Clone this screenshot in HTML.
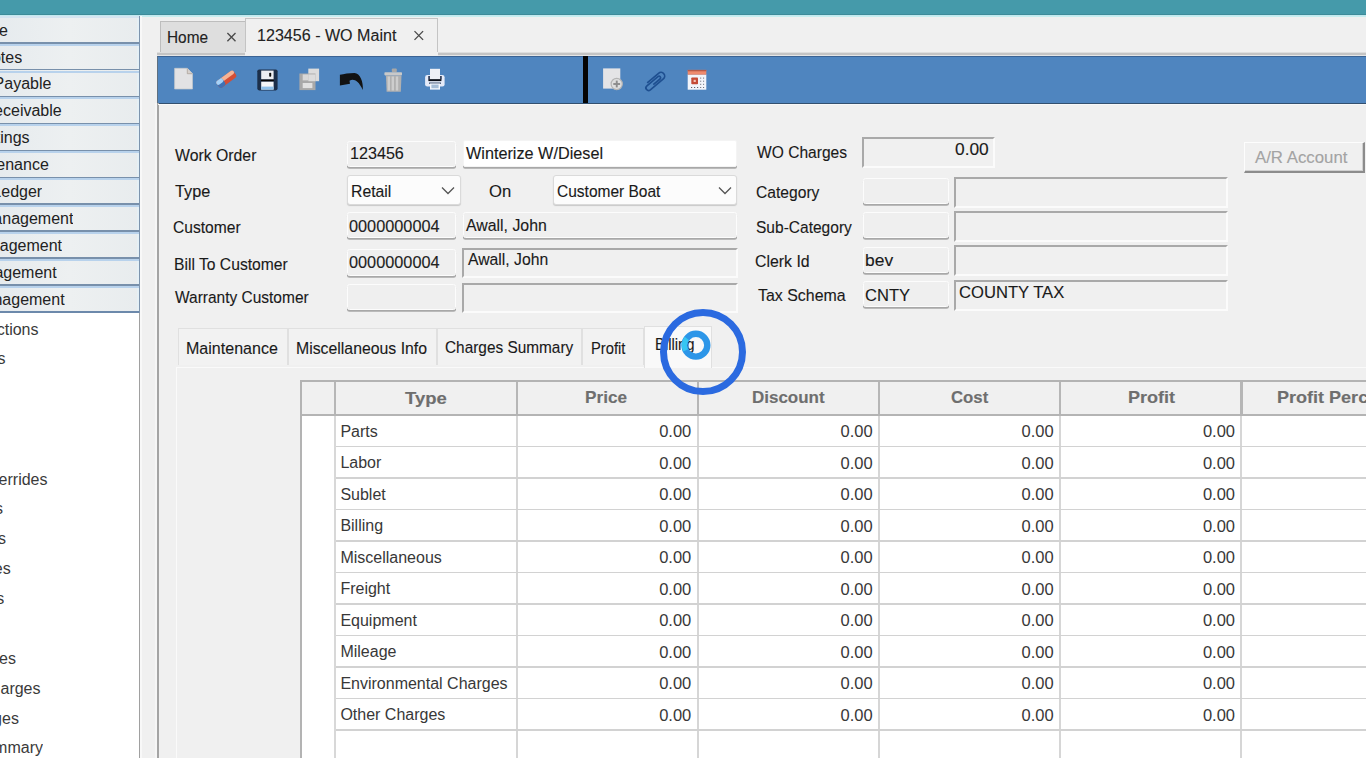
<!DOCTYPE html>
<html><head><meta charset="utf-8"><title>WO Maint</title>
<style>
*{margin:0;padding:0;box-sizing:border-box}
html,body{width:1366px;height:758px;overflow:hidden;background:#f0f0f0;font-family:"Liberation Sans", sans-serif;color:#1e1e1e}
.ab{position:absolute}
.t{position:absolute;white-space:nowrap;line-height:1;transform-origin:0 0;-webkit-text-stroke:0.12px currentColor}
.sb{position:absolute;left:0;width:139px;height:27px;background:linear-gradient(90deg,#e6ebee 0%,#edf0f1 50%,#e8ecee 100%)}
.sbl{position:absolute;left:0;white-space:nowrap;direction:rtl;overflow:hidden;font-size:16px;line-height:1;color:#222}
.li{position:absolute;left:0;white-space:nowrap;direction:rtl;overflow:hidden;font-size:16px;line-height:1;color:#3a3a3a}
.ro{position:absolute;background:#efefef;border:1.3px solid #fcfcfc;border-radius:2.5px;box-shadow:0 1.8px 0 #a8a8a8}
.wh{position:absolute;background:#fff;border:1px solid #f4f4f4;border-radius:2px;box-shadow:0 1.8px 0 #a8a8a8}
.sk{position:absolute;background:#f0f0f0;border-top:2px solid #a9a9a9;border-left:2px solid #a9a9a9;border-right:2px solid #fbfbfb;border-bottom:2px solid #fbfbfb}
.sel{position:absolute;background:#fcfcfc;border:1px solid #dadada;border-radius:3px;box-shadow:0 1px 1px #c8c8c8}
.gc{position:absolute;white-space:nowrap;font-size:16.5px;line-height:1;color:#383838}
</style></head><body>

<div class="ab" style="left:0;top:0;width:1366px;height:15px;background:#459aaa"></div>
<div class="ab" style="left:0;top:13.8px;width:1366px;height:1.2px;background:#3d8b99"></div>
<div class="ab" style="left:0;top:15px;width:1366px;height:1.6px;background:#c6eef0"></div>
<div class="ab" style="left:0;top:312px;width:139px;height:446px;background:#fff"></div>
<div class="sb" style="top:16.0px"></div>
<div class="sb" style="top:42.9px"></div>
<div class="sb" style="top:69.8px"></div>
<div class="sb" style="top:96.7px"></div>
<div class="sb" style="top:123.6px"></div>
<div class="sb" style="top:150.5px"></div>
<div class="sb" style="top:177.4px"></div>
<div class="sb" style="top:204.3px"></div>
<div class="sb" style="top:231.2px"></div>
<div class="sb" style="top:258.1px"></div>
<div class="sb" style="top:285.0px"></div>
<div class="ab" style="left:136.5px;top:16px;width:2.5px;height:296px;background:#e4f2fa;opacity:.7"></div>
<div class="ab" style="left:0;top:42.0px;width:139px;height:1.6px;background:#7890ab"></div>
<div class="ab" style="left:0;top:43.6px;width:139px;height:2px;background:#b8d2ec"></div>
<div class="sbl" style="top:22.6px;width:7.9px;height:19px">Home</div>
<div class="ab" style="left:0;top:68.9px;width:139px;height:1.6px;background:#7890ab"></div>
<div class="ab" style="left:0;top:70.5px;width:139px;height:2px;background:#b8d2ec"></div>
<div class="sbl" style="top:49.5px;width:22.2px;height:19px">Quotes</div>
<div class="ab" style="left:0;top:95.8px;width:139px;height:1.6px;background:#7890ab"></div>
<div class="ab" style="left:0;top:97.4px;width:139px;height:2px;background:#b8d2ec"></div>
<div class="sbl" style="top:76.4px;width:51.4px;height:19px">Accounts Payable</div>
<div class="ab" style="left:0;top:122.7px;width:139px;height:1.6px;background:#7890ab"></div>
<div class="ab" style="left:0;top:124.3px;width:139px;height:2px;background:#b8d2ec"></div>
<div class="sbl" style="top:103.3px;width:61.7px;height:19px">Accounts Receivable</div>
<div class="ab" style="left:0;top:149.6px;width:139px;height:1.6px;background:#7890ab"></div>
<div class="ab" style="left:0;top:151.2px;width:139px;height:2px;background:#b8d2ec"></div>
<div class="sbl" style="top:130.2px;width:29.6px;height:19px">Listings</div>
<div class="ab" style="left:0;top:176.5px;width:139px;height:1.6px;background:#7890ab"></div>
<div class="ab" style="left:0;top:178.1px;width:139px;height:2px;background:#b8d2ec"></div>
<div class="sbl" style="top:157.1px;width:48.8px;height:19px">Maintenance</div>
<div class="ab" style="left:0;top:203.4px;width:139px;height:1.6px;background:#7890ab"></div>
<div class="ab" style="left:0;top:205.0px;width:139px;height:2px;background:#b8d2ec"></div>
<div class="sbl" style="top:184.0px;width:42.2px;height:19px">General Ledger</div>
<div class="ab" style="left:0;top:230.3px;width:139px;height:1.6px;background:#7890ab"></div>
<div class="ab" style="left:0;top:231.9px;width:139px;height:2px;background:#b8d2ec"></div>
<div class="sbl" style="top:210.9px;width:73.4px;height:19px">Management</div>
<div class="ab" style="left:0;top:257.2px;width:139px;height:1.6px;background:#7890ab"></div>
<div class="ab" style="left:0;top:258.8px;width:139px;height:2px;background:#b8d2ec"></div>
<div class="sbl" style="top:237.8px;width:62.0px;height:19px">Management</div>
<div class="ab" style="left:0;top:284.1px;width:139px;height:1.6px;background:#7890ab"></div>
<div class="ab" style="left:0;top:285.7px;width:139px;height:2px;background:#b8d2ec"></div>
<div class="sbl" style="top:264.7px;width:56.7px;height:19px">Management</div>
<div class="ab" style="left:0;top:311.0px;width:139px;height:1.6px;background:#7890ab"></div>
<div class="sbl" style="top:291.6px;width:64.6px;height:19px">Management</div>
<div class="ab" style="left:0;top:311px;width:139px;height:2px;background:#6c89ab"></div>
<div class="ab" style="left:139px;top:16px;width:1px;height:297px;background:#7d94ad"></div>
<div class="ab" style="left:139px;top:313px;width:1px;height:445px;background:#a0a0a0"></div>
<div class="ab" style="left:0;top:15px;width:1366px;height:1.4px;background:#c2e9ef"></div><div class="ab" style="left:0;top:16.4px;width:139px;height:1.2px;background:#d4e4f0"></div>
<div class="li" style="top:321.5px;width:38.5px;height:19px">Transactions</div>
<div class="li" style="top:351.2px;width:5.5px;height:19px">Items</div>
<div class="li" style="top:471.6px;width:47.5px;height:19px">Overrides</div>
<div class="li" style="top:501.0px;width:2.9px;height:19px">Options</div>
<div class="li" style="top:530.9px;width:5.9px;height:19px">Accounts</div>
<div class="li" style="top:561.1px;width:10.7px;height:19px">Types</div>
<div class="li" style="top:590.8px;width:4.3px;height:19px">Parts</div>
<div class="li" style="top:650.7px;width:16.0px;height:19px">Rates</div>
<div class="li" style="top:681.1px;width:40.5px;height:19px">Other Charges</div>
<div class="li" style="top:710.7px;width:18.9px;height:19px">Charges</div>
<div class="li" style="top:740.2px;width:43.0px;height:19px">Summary</div>
<div class="ab" style="left:157px;top:313px;width:1.6px;height:445px;background:#a4a4a4"></div>
<div class="ab" style="left:159.5px;top:21px;width:86px;height:32px;background:#dedede;border:1px solid #bdbdbd;border-bottom:none"></div>
<div class="t" id="home" style="left:166.76px;top:29.65px;font-size:16px;font-weight:400;color:#222;transform:scaleX(0.9612)">Home</div>
<svg class="ab" style="left:224px;top:30px" width="15" height="15" viewBox="224 30 15 15"><path d="M227.4 33.1 L235.5 41.2 M235.5 33.1 L227.4 41.2" stroke="#4a4a4a" stroke-width="1.35" fill="none"/></svg>
<div class="ab" style="left:245px;top:18px;width:193px;height:38px;background:#f0f0f0;border:1px solid #c4c4c4;border-bottom:none"></div>
<div class="t" id="wot" style="left:256.59px;top:28.25px;font-size:16px;font-weight:400;color:#222;transform:scaleX(1.0050)">123456 - WO Maint</div>
<svg class="ab" style="left:411px;top:28px" width="15" height="15" viewBox="411 28 15 15"><path d="M414.5 31.1 L423.1 39.9 M423.1 31.1 L414.5 39.9" stroke="#4a4a4a" stroke-width="1.35" fill="none"/></svg>
<div class="ab" style="left:157px;top:52px;width:1209px;height:1px;background:#dedede"></div><div class="ab" style="left:157px;top:53px;width:1209px;height:2.2px;background:#c4c4c4"></div><div class="ab" style="left:157px;top:55.2px;width:1209px;height:1px;background:#e6e6e6"></div>
<div class="ab" style="left:245px;top:52px;width:193px;height:4px;background:#f0f0f0"></div>
<div class="ab" style="left:157px;top:56px;width:1209px;height:47.8px;background:#4f85bf;border-top:1px solid #3b6394;border-bottom:1.3px solid #33506f;border-left:1.5px solid #5f7080"></div>
<div class="ab" style="left:583px;top:56px;width:4.5px;height:47px;background:#050505"></div>
<div class="ab" style="left:157px;top:103px;width:1.6px;height:210px;background:#a4a4a4"></div><div class="ab" style="left:155px;top:103px;width:1.5px;height:655px;background:#f6f6f6"></div><div class="ab" style="left:140px;top:16px;width:2px;height:742px;background:#f8f8f8"></div><div class="ab" style="left:158px;top:104px;width:1208px;height:1.2px;background:#f8f8f8"></div>

<svg class="ab" style="left:170px;top:64px" width="30" height="30" viewBox="170 64 30 30">
 <path d="M174.6 68.3 H187.4 L192.5 73.6 V89 H174.6 Z" fill="#e2e2e4"/>
 <path d="M174.6 68.3 H187.4 L192.5 73.6 V89 H174.6 Z" fill="none" stroke="#c4c8cc" stroke-width="0.7"/>
 <path d="M187.3 68.5 V73.7 H192.4" fill="#d6d0cc" stroke="#a89c94" stroke-width="0.7"/>
</svg>
<svg class="ab" style="left:212px;top:66px" width="28" height="26" viewBox="212 66 28 26">
 <g transform="translate(226.4 79.3) rotate(-36)">
  <rect x="-10.5" y="-4.1" width="21" height="8.2" rx="2.4" fill="#d44e36"/>
  <rect x="-10.5" y="-4.1" width="21" height="4" rx="1.8" fill="#f6b496"/>
  <rect x="-10.5" y="-4.1" width="7.5" height="8.2" rx="2.4" fill="#3d72b6"/>
  <rect x="-10.5" y="-4.1" width="7.5" height="4.2" rx="1.8" fill="#a6d2f8"/>
 </g>
</svg>
<svg class="ab" style="left:254px;top:66px" width="28" height="28" viewBox="254 66 28 28">
 <rect x="257.3" y="69.4" width="20.3" height="21" rx="1.8" fill="#1c2f4a"/>
 <rect x="261.2" y="70.6" width="12.4" height="8.8" fill="#eceef2"/>
 <rect x="269.2" y="72.8" width="2" height="3.9" rx="0.8" fill="#0c0c0c"/>
 <rect x="261.2" y="81.6" width="12.4" height="8" fill="#f4f6f8"/>
 <rect x="261.2" y="86.6" width="12.4" height="3" fill="#8ec0ea"/>
 <rect x="261" y="79.6" width="12.8" height="1.6" fill="#050505"/>
</svg>
<svg class="ab" style="left:296px;top:66px" width="28" height="28" viewBox="296 66 28 28">
 <rect x="308.3" y="68.6" width="10.8" height="12.6" fill="#dcdcdc"/>
 <rect x="299.4" y="73.5" width="16.1" height="16.6" fill="#a9a9a9"/>
 <rect x="302.7" y="74.4" width="5.6" height="6" fill="#d8d8d8"/>
 <rect x="308.3" y="74.4" width="7.2" height="6.8" fill="#dcdcdc"/>
 <rect x="302.7" y="83" width="9.7" height="5.1" fill="#e2e2e2"/>
</svg>
<svg class="ab" style="left:336px;top:66px" width="34" height="28" viewBox="336 66 34 28">
 <path d="M339.9 74.8 L339.9 85.6 L350 83.7 L349.5 80.8 C353 78.6 358 79.5 362.8 90 C363.5 82 360 73 354.5 73 C349 73 344 74 339.9 74.8 Z" fill="#121212"/>
</svg>
<svg class="ab" style="left:382px;top:66px" width="24" height="28" viewBox="382 66 24 28">
 <rect x="391.8" y="68.6" width="5" height="3.6" rx="1" fill="#a8a8a8"/>
 <rect x="384.4" y="72.2" width="17.6" height="3.2" rx="0.8" fill="#c9c9c9"/>
 <path d="M385.9 75.4 H401.5 L400.8 91.7 H386.6 Z" fill="#b0b0b0"/>
 <rect x="387.6" y="76.5" width="2.4" height="14" fill="#cdcdcd"/>
 <rect x="391.6" y="76.5" width="2.4" height="14" fill="#cdcdcd"/>
 <rect x="395.8" y="76.5" width="2.4" height="14" fill="#cdcdcd"/>
</svg>
<svg class="ab" style="left:422px;top:66px" width="26" height="28" viewBox="422 66 26 28">
 <rect x="430" y="68.9" width="10" height="11" fill="#eceef4"/>
 <rect x="425.1" y="75" width="19.5" height="11.5" rx="2.2" fill="#e4eaf8"/>
 <rect x="428.2" y="76" width="13.6" height="3.4" fill="#3a4660"/>
 <rect x="430" y="68.9" width="10" height="10.4" fill="#eef0f6"/>
 <rect x="428.4" y="79.2" width="13" height="1.9" fill="#0a0e16"/>
 <rect x="429" y="82.4" width="12" height="1.6" fill="#5a6a86"/>
 <rect x="430" y="83.5" width="10" height="6.1" fill="#f2f6fc"/>
 <rect x="431.4" y="84.6" width="7.2" height="3.6" fill="#a4bcd6"/>
</svg>
<svg class="ab" style="left:600px;top:66px" width="26" height="28" viewBox="600 66 26 28">
 <rect x="603.1" y="68.4" width="17.2" height="20.2" fill="#e4e4e6"/>
 <circle cx="616.7" cy="84" r="5.6" fill="#dedede" stroke="#b4b4b4" stroke-width="1.2"/>
 <rect x="615.8" y="80.6" width="1.9" height="6.8" fill="#8c8c8c"/>
 <rect x="613.3" y="83.05" width="6.8" height="1.9" fill="#8c8c8c"/>
</svg>
<svg class="ab" style="left:642px;top:68px" width="26" height="26" viewBox="642 68 26 26">
 <g transform="translate(654.9 81.2) rotate(-40) scale(1.16)" fill="none" stroke="#1e4f90" stroke-width="1.45">
  <path d="M-6 -3.2 H6.8 A3.2 3.2 0 0 1 6.8 3.2 H-7.8 A2.3 2.3 0 0 1 -7.8 -1.4 H4.6 A1.4 1.4 0 0 1 4.6 1.4 H-3"/>
 </g>
</svg>
<svg class="ab" style="left:684px;top:66px" width="26" height="28" viewBox="684 66 26 28">
 <rect x="687.7" y="74.5" width="18.6" height="15.2" fill="#f2f4fa"/>
 <rect x="687.7" y="69.9" width="18.6" height="4.8" fill="#ee8a6e"/>
 <rect x="687.7" y="69.9" width="18.6" height="1.4" fill="#b85a48"/>
 <rect x="691.3" y="77.5" width="6.7" height="6.7" rx="0.8" fill="#c44a36"/>
 <rect x="693.6" y="79.8" width="2.2" height="2.2" fill="#f6c4b6"/>
 <g fill="#606470">
  <rect x="700.2" y="77.6" width="1" height="1"/><rect x="703.1" y="77.6" width="1" height="1"/>
  <rect x="700.2" y="80.7" width="1" height="1"/><rect x="703.1" y="80.7" width="1" height="1"/>
  <rect x="700.2" y="83.8" width="1" height="1"/><rect x="703.1" y="83.8" width="1" height="1"/>
  <rect x="691" y="87" width="1.2" height="1"/><rect x="694" y="87" width="1.2" height="1"/><rect x="697" y="87" width="1.2" height="1"/><rect x="700.2" y="87" width="1" height="1"/><rect x="703.1" y="87" width="1" height="1"/>
 </g>
</svg>

<div class="t" id="l1" style="left:174.81px;top:146.60px;font-size:17px;font-weight:400;color:#1a1a1a;transform:scaleX(0.9299)">Work Order</div>
<div class="t" id="l2" style="left:174.82px;top:182.60px;font-size:17px;font-weight:400;color:#1a1a1a;transform:scaleX(0.9558)">Type</div>
<div class="t" id="l3" style="left:172.77px;top:218.80px;font-size:17px;font-weight:400;color:#1a1a1a;transform:scaleX(0.9179)">Customer</div>
<div class="t" id="l4" style="left:173.99px;top:256.00px;font-size:17px;font-weight:400;color:#1a1a1a;transform:scaleX(0.9218)">Bill To Customer</div>
<div class="t" id="l5" style="left:174.61px;top:289.40px;font-size:17px;font-weight:400;color:#1a1a1a;transform:scaleX(0.9108)">Warranty Customer</div>
<div class="ro" style="left:346.5px;top:140.5px;width:109px;height:26.2px"></div>
<div class="t" id="i1" style="left:350.16px;top:145.40px;font-size:17px;font-weight:400;color:#1a1a1a;transform:scaleX(0.9490)">123456</div>
<div class="sel" style="left:346.5px;top:175px;width:114px;height:30px"></div>
<div class="t" id="i2" style="left:350.95px;top:182.80px;font-size:17px;font-weight:400;color:#1a1a1a;transform:scaleX(0.9283)">Retail</div>
<svg class="ab" style="left:441px;top:186px" width="14" height="9" viewBox="0 0 14 9"><path d="M1 1.5 L7 7.5 L13 1.5" fill="none" stroke="#555" stroke-width="1.3"/></svg>
<div class="ro" style="left:346.5px;top:211.5px;width:109px;height:26.2px"></div>
<div class="t" id="i3" style="left:348.58px;top:217.60px;font-size:17px;font-weight:400;color:#222;transform:scaleX(0.9584)">0000000004</div>
<div class="ro" style="left:346.5px;top:249px;width:109px;height:26.7px"></div>
<div class="t" id="i4" style="left:348.58px;top:254.20px;font-size:17px;font-weight:400;color:#222;transform:scaleX(0.9584)">0000000004</div>
<div class="ro" style="left:346.5px;top:284px;width:109px;height:25.7px"></div>
<div class="wh" style="left:463px;top:140px;width:274px;height:26.7px"></div>
<div class="t" id="d1" style="left:466.00px;top:144.80px;font-size:17px;font-weight:400;color:#1a1a1a;transform:scaleX(0.9542)">Winterize W/Diesel</div>
<div class="t" id="on" style="left:488.89px;top:182.80px;font-size:17px;font-weight:400;color:#1a1a1a;transform:scaleX(0.9799)">On</div>
<div class="sel" style="left:552.5px;top:175.3px;width:184.5px;height:30px"></div>
<div class="t" id="cb" style="left:556.59px;top:182.80px;font-size:17px;font-weight:400;color:#1a1a1a;transform:scaleX(0.9122)">Customer Boat</div>
<svg class="ab" style="left:718px;top:186px" width="14" height="9" viewBox="0 0 14 9"><path d="M1 1.5 L7 7.5 L13 1.5" fill="none" stroke="#555" stroke-width="1.3"/></svg>
<div class="ro" style="left:463px;top:211.5px;width:274px;height:26.2px"></div>
<div class="t" id="aj1" style="left:466.40px;top:216.90px;font-size:17px;font-weight:400;color:#1a1a1a;transform:scaleX(0.9329)">Awall, John</div>
<div class="sk" style="left:462px;top:248.2px;width:276px;height:29.5px"></div>
<div class="t" id="aj2" style="left:468.20px;top:251.00px;font-size:17px;font-weight:400;color:#1a1a1a;transform:scaleX(0.9259)">Awall, John</div>
<div class="sk" style="left:462px;top:283px;width:276px;height:30px"></div>
<div class="t" id="r1" style="left:757.00px;top:144.40px;font-size:17px;font-weight:400;color:#1a1a1a;transform:scaleX(0.9160)">WO Charges</div>
<div class="t" id="r2" style="left:755.58px;top:183.70px;font-size:17px;font-weight:400;color:#1a1a1a;transform:scaleX(0.9195)">Category</div>
<div class="t" id="r3" style="left:755.99px;top:218.60px;font-size:17px;font-weight:400;color:#1a1a1a;transform:scaleX(0.9135)">Sub-Category</div>
<div class="t" id="r4" style="left:754.97px;top:252.60px;font-size:17px;font-weight:400;color:#1a1a1a;transform:scaleX(0.9336)">Clerk Id</div>
<div class="t" id="r5" style="left:757.59px;top:287.40px;font-size:17px;font-weight:400;color:#1a1a1a;transform:scaleX(0.9364)">Tax Schema</div>
<div class="sk" style="left:862px;top:137.3px;width:132.5px;height:31px"></div>
<div class="t" id="wc" style="left:955.12px;top:141.40px;font-size:17px;font-weight:400;color:#1a1a1a;transform:scaleX(1.0195)">0.00</div>
<div class="ro" style="left:863px;top:178px;width:85.6px;height:25.7px"></div>
<div class="ro" style="left:863px;top:212.3px;width:85.6px;height:25.7px"></div>
<div class="ro" style="left:863px;top:247px;width:85.6px;height:25.5px"></div>
<div class="ro" style="left:863px;top:281px;width:85.6px;height:25.7px"></div>
<div class="t" id="bev" style="left:864.94px;top:252.40px;font-size:17px;font-weight:400;color:#1a1a1a;transform:scaleX(1.0258)">bev</div>
<div class="t" id="cnty" style="left:864.93px;top:286.80px;font-size:17px;font-weight:400;color:#1a1a1a;transform:scaleX(0.9739)">CNTY</div>
<div class="sk" style="left:954px;top:176.5px;width:274px;height:31px"></div>
<div class="sk" style="left:954px;top:210.8px;width:274px;height:31px"></div>
<div class="sk" style="left:954px;top:245.4px;width:274px;height:31px"></div>
<div class="sk" style="left:954px;top:279.5px;width:274px;height:31px"></div>
<div class="t" id="ctax" style="left:958.58px;top:283.60px;font-size:17px;font-weight:400;color:#1a1a1a;transform:scaleX(0.9774)">COUNTY TAX</div>
<div class="ab" style="left:1243.5px;top:142px;width:121.5px;height:31px;background:#f0f0f0;border-top:1px solid #fdfdfd;border-left:1px solid #fdfdfd;border-right:2px solid #8c8c8c;border-bottom:2px solid #8c8c8c;box-shadow:inset -1px -1px 0 #d0d0d0"></div>
<div class="t" id="ar" style="left:1255.00px;top:149.00px;font-size:17px;font-weight:400;color:#a3a3a3;transform:scaleX(0.9880)">A/R Account</div>
<div class="ab" style="left:176px;top:366.5px;width:1190px;height:392px;background:#f0f0f0;border-top:1px solid #fafafa;border-left:1px solid #fafafa"></div>
<div class="ab" style="left:178.3px;top:328.3px;width:109.3px;height:37px;background:#f2f2f2;border:1px solid #e0e0e0;border-bottom:none"></div>
<div class="ab" style="left:287.6px;top:328.3px;width:149.0px;height:37px;background:#f2f2f2;border:1px solid #e0e0e0;border-bottom:none"></div>
<div class="ab" style="left:436.6px;top:328.3px;width:145.6px;height:37px;background:#f2f2f2;border:1px solid #e0e0e0;border-bottom:none"></div>
<div class="ab" style="left:582.2px;top:328.3px;width:61.6px;height:37px;background:#f2f2f2;border:1px solid #e0e0e0;border-bottom:none"></div>
<div class="ab" style="left:643.8px;top:325.5px;width:68px;height:42px;background:#f9f9f9;border:1px solid #e0e0e0;border-bottom:none"></div>
<div class="t" id="t1" style="left:185.79px;top:339.60px;font-size:17px;font-weight:400;color:#1a1a1a;transform:scaleX(0.9432)">Maintenance</div>
<div class="t" id="t2" style="left:296.39px;top:339.60px;font-size:17px;font-weight:400;color:#1a1a1a;transform:scaleX(0.9305)">Miscellaneous Info</div>
<div class="t" id="t3" style="left:445.20px;top:339.00px;font-size:17px;font-weight:400;color:#1a1a1a;transform:scaleX(0.9046)">Charges Summary</div>
<div class="t" id="t4" style="left:591.20px;top:339.60px;font-size:17px;font-weight:400;color:#1a1a1a;transform:scaleX(0.8676)">Profit</div>
<div class="t" id="t5" style="left:655.13px;top:335.80px;font-size:17px;font-weight:400;color:#1a1a1a;transform:scaleX(0.8731)">Billing</div>
<div class="ab" style="left:300.0px;top:379.6px;width:1066.0px;height:378.4px;background:#fff;border-left:2px solid #b3b3b3;border-top:2px solid #b3b3b3"></div>
<div class="ab" style="left:302.0px;top:381.6px;width:1064.0px;height:32.2px;background:#f0f0f0"></div>
<div class="ab" style="left:302.0px;top:413.7px;width:1064.0px;height:2px;background:#b4b4b4"></div>
<div class="ab" style="left:334.3px;top:381.6px;width:2.1px;height:32.1px;background:#b6b6b6"></div>
<div class="ab" style="left:334.3px;top:415.7px;width:2px;height:343px;background:#d8d8d8"></div>
<div class="ab" style="left:515.5px;top:381.6px;width:2.2px;height:32.1px;background:#b6b6b6"></div>
<div class="ab" style="left:515.5px;top:415.7px;width:2px;height:343px;background:#d6d6d6"></div>
<div class="ab" style="left:696.7px;top:381.6px;width:2.2px;height:32.1px;background:#b6b6b6"></div>
<div class="ab" style="left:696.7px;top:415.7px;width:2px;height:343px;background:#d6d6d6"></div>
<div class="ab" style="left:878.0px;top:381.6px;width:2.2px;height:32.1px;background:#b6b6b6"></div>
<div class="ab" style="left:878.0px;top:415.7px;width:2px;height:343px;background:#d6d6d6"></div>
<div class="ab" style="left:1059.1px;top:381.6px;width:2.2px;height:32.1px;background:#b6b6b6"></div>
<div class="ab" style="left:1059.1px;top:415.7px;width:2px;height:343px;background:#d6d6d6"></div>
<div class="ab" style="left:1240.4px;top:381.6px;width:2.2px;height:32.1px;background:#b6b6b6"></div>
<div class="ab" style="left:1240.4px;top:415.7px;width:2px;height:343px;background:#d6d6d6"></div>
<div class="t" id="gh1" style="left:405.40px;top:390.42px;font-size:16.5px;font-weight:700;color:#6e6e6e;transform:scaleX(1.1211)">Type</div>
<div class="t" id="gh2" style="left:585.18px;top:389.22px;font-size:16.5px;font-weight:700;color:#6e6e6e;transform:scaleX(1.0411)">Price</div>
<div class="t" id="gh3" style="left:752.40px;top:389.22px;font-size:16.5px;font-weight:700;color:#6e6e6e;transform:scaleX(1.0291)">Discount</div>
<div class="t" id="gh4" style="left:951.17px;top:389.22px;font-size:16.5px;font-weight:700;color:#6e6e6e;transform:scaleX(1.0159)">Cost</div>
<div class="t" id="gh5" style="left:1127.97px;top:389.22px;font-size:16.5px;font-weight:700;color:#6e6e6e;transform:scaleX(1.0925)">Profit</div>
<div class="t" id="gh6" style="left:1277.00px;top:389.22px;font-size:16.5px;font-weight:700;color:#6e6e6e;transform:scaleX(1.0925)">Profit Percent</div>
<div class="ab" style="left:336.3px;top:445.6px;width:1030px;height:1.8px;background:#d2d2d2"></div>
<div class="gc" style="left:340.4px;top:423.8px;font-size:16px">Parts</div>
<div class="gc" style="left:591.3px;width:100px;text-align:right;top:423.4px">0.00</div>
<div class="gc" style="left:772.6px;width:100px;text-align:right;top:423.4px">0.00</div>
<div class="gc" style="left:953.7px;width:100px;text-align:right;top:423.4px">0.00</div>
<div class="gc" style="left:1135.0px;width:100px;text-align:right;top:423.4px">0.00</div>
<div class="ab" style="left:336.3px;top:477.1px;width:1030px;height:1.8px;background:#d2d2d2"></div>
<div class="gc" style="left:340.4px;top:455.3px;font-size:16px">Labor</div>
<div class="gc" style="left:591.3px;width:100px;text-align:right;top:454.9px">0.00</div>
<div class="gc" style="left:772.6px;width:100px;text-align:right;top:454.9px">0.00</div>
<div class="gc" style="left:953.7px;width:100px;text-align:right;top:454.9px">0.00</div>
<div class="gc" style="left:1135.0px;width:100px;text-align:right;top:454.9px">0.00</div>
<div class="ab" style="left:336.3px;top:508.6px;width:1030px;height:1.8px;background:#d2d2d2"></div>
<div class="gc" style="left:340.4px;top:486.8px;font-size:16px">Sublet</div>
<div class="gc" style="left:591.3px;width:100px;text-align:right;top:486.4px">0.00</div>
<div class="gc" style="left:772.6px;width:100px;text-align:right;top:486.4px">0.00</div>
<div class="gc" style="left:953.7px;width:100px;text-align:right;top:486.4px">0.00</div>
<div class="gc" style="left:1135.0px;width:100px;text-align:right;top:486.4px">0.00</div>
<div class="ab" style="left:336.3px;top:540.1px;width:1030px;height:1.8px;background:#d2d2d2"></div>
<div class="gc" style="left:340.4px;top:518.3px;font-size:16px">Billing</div>
<div class="gc" style="left:591.3px;width:100px;text-align:right;top:517.9px">0.00</div>
<div class="gc" style="left:772.6px;width:100px;text-align:right;top:517.9px">0.00</div>
<div class="gc" style="left:953.7px;width:100px;text-align:right;top:517.9px">0.00</div>
<div class="gc" style="left:1135.0px;width:100px;text-align:right;top:517.9px">0.00</div>
<div class="ab" style="left:336.3px;top:571.6px;width:1030px;height:1.8px;background:#d2d2d2"></div>
<div class="gc" style="left:340.4px;top:549.8px;font-size:16px">Miscellaneous</div>
<div class="gc" style="left:591.3px;width:100px;text-align:right;top:549.4px">0.00</div>
<div class="gc" style="left:772.6px;width:100px;text-align:right;top:549.4px">0.00</div>
<div class="gc" style="left:953.7px;width:100px;text-align:right;top:549.4px">0.00</div>
<div class="gc" style="left:1135.0px;width:100px;text-align:right;top:549.4px">0.00</div>
<div class="ab" style="left:336.3px;top:603.1px;width:1030px;height:1.8px;background:#d2d2d2"></div>
<div class="gc" style="left:340.4px;top:581.3px;font-size:16px">Freight</div>
<div class="gc" style="left:591.3px;width:100px;text-align:right;top:580.9px">0.00</div>
<div class="gc" style="left:772.6px;width:100px;text-align:right;top:580.9px">0.00</div>
<div class="gc" style="left:953.7px;width:100px;text-align:right;top:580.9px">0.00</div>
<div class="gc" style="left:1135.0px;width:100px;text-align:right;top:580.9px">0.00</div>
<div class="ab" style="left:336.3px;top:634.6px;width:1030px;height:1.8px;background:#d2d2d2"></div>
<div class="gc" style="left:340.4px;top:612.8px;font-size:16px">Equipment</div>
<div class="gc" style="left:591.3px;width:100px;text-align:right;top:612.4px">0.00</div>
<div class="gc" style="left:772.6px;width:100px;text-align:right;top:612.4px">0.00</div>
<div class="gc" style="left:953.7px;width:100px;text-align:right;top:612.4px">0.00</div>
<div class="gc" style="left:1135.0px;width:100px;text-align:right;top:612.4px">0.00</div>
<div class="ab" style="left:336.3px;top:666.1px;width:1030px;height:1.8px;background:#d2d2d2"></div>
<div class="gc" style="left:340.4px;top:644.3px;font-size:16px">Mileage</div>
<div class="gc" style="left:591.3px;width:100px;text-align:right;top:643.9px">0.00</div>
<div class="gc" style="left:772.6px;width:100px;text-align:right;top:643.9px">0.00</div>
<div class="gc" style="left:953.7px;width:100px;text-align:right;top:643.9px">0.00</div>
<div class="gc" style="left:1135.0px;width:100px;text-align:right;top:643.9px">0.00</div>
<div class="ab" style="left:336.3px;top:697.6px;width:1030px;height:1.8px;background:#d2d2d2"></div>
<div class="gc" style="left:340.4px;top:675.8px;font-size:16px">Environmental Charges</div>
<div class="gc" style="left:591.3px;width:100px;text-align:right;top:675.4px">0.00</div>
<div class="gc" style="left:772.6px;width:100px;text-align:right;top:675.4px">0.00</div>
<div class="gc" style="left:953.7px;width:100px;text-align:right;top:675.4px">0.00</div>
<div class="gc" style="left:1135.0px;width:100px;text-align:right;top:675.4px">0.00</div>
<div class="ab" style="left:336.3px;top:729.1px;width:1030px;height:1.8px;background:#d2d2d2"></div>
<div class="gc" style="left:340.4px;top:707.3px;font-size:16px">Other Charges</div>
<div class="gc" style="left:591.3px;width:100px;text-align:right;top:706.9px">0.00</div>
<div class="gc" style="left:772.6px;width:100px;text-align:right;top:706.9px">0.00</div>
<div class="gc" style="left:953.7px;width:100px;text-align:right;top:706.9px">0.00</div>
<div class="gc" style="left:1135.0px;width:100px;text-align:right;top:706.9px">0.00</div>
<svg class="ab" style="left:650px;top:299px" width="106" height="106" viewBox="0 0 106 106"><circle cx="53" cy="53" r="39.5" fill="none" stroke="#2b6ae0" stroke-width="7"/></svg>
<svg class="ab" style="left:675px;top:325px" width="42" height="42" viewBox="0 0 42 42"><circle cx="20.9" cy="20.2" r="11.4" fill="none" stroke="#2d96e8" stroke-width="6.4"/><path d="M11.8 13.3 A11.4 11.4 0 0 0 10.7 25.4" fill="none" stroke="#36c6f2" stroke-width="5.2"/></svg>
</body></html>
